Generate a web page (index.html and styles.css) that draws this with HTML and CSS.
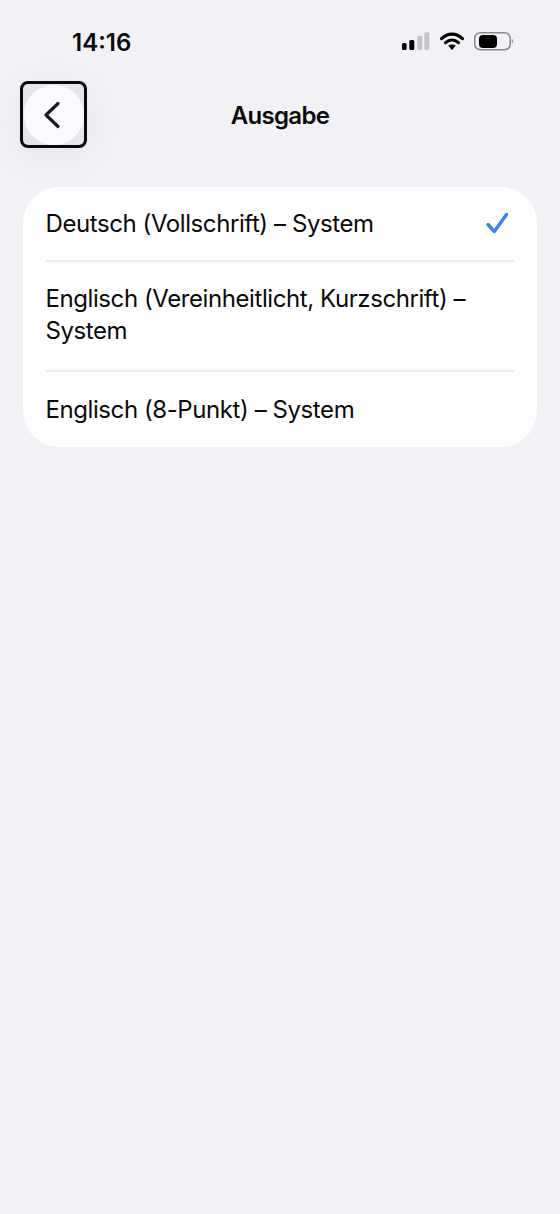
FILE: index.html
```html
<!doctype html>
<html lang="de">
<head>
    <meta charset="UTF-8">
    <title>Ausgabe</title>
    <link rel="stylesheet" href="styles.css">
</head>
<body>
<div class="status">
    <span class="time">14:16</span>
    <div class="status-icons">
        <svg width="28" height="20" viewBox="0 0 28 20">
            <rect x="0" y="12" width="4.6" height="7" rx="1.5" fill="#000"/>
            <rect x="7.3" y="9" width="5" height="10" rx="1.5" fill="#000"/>
            <rect x="15.3" y="4.7" width="5" height="14.3" rx="1.5" fill="#c4c4c8"/>
            <rect x="22.3" y="1.3" width="5" height="17.7" rx="1.5" fill="#c4c4c8"/>
        </svg>
        <svg width="24" height="20" viewBox="0 0 24 20">
            <path d="M1.6 7.6C8 1.6 16 1.6 22.4 7.6M5.6 11.6C9.5 8.1 14.5 8.1 18.4 11.6" fill="none" stroke="#000" stroke-width="3.2" stroke-linecap="round"/>
            <path d="M8.2 14.8C10.5 13 13.5 13 15.8 14.8L12 19Z" fill="#000"/>
        </svg>
        <svg width="40" height="20" viewBox="0 0 40 20">
            <rect x="0.75" y="1.75" width="35.5" height="17" rx="5.5" fill="none" stroke="#8a8a8e" stroke-width="1.5"/>
            <rect x="5" y="4" width="18" height="13" rx="4" fill="#000"/>
            <path d="M37.8 8C39.3 8.5 39.3 12 37.8 12.5Z" fill="#8a8a8e"/>
        </svg>
    </div>
</div>

<div class="nav">
    <a class="back" href="#">
        <span class="back-circle">
            <svg width="18" height="30" viewBox="0 0 18 30">
                <path d="M15 3.5L3 15L15 26.5" fill="none" stroke="#1c1c1e" stroke-width="3.2" stroke-linecap="round" stroke-linejoin="round"/>
            </svg>
        </span>
    </a>
    <h1>Ausgabe</h1>
</div>

<ul class="list">
    <li class="item">
        <span>Deutsch (Vollschrift) – System</span>
        <svg class="check" width="26" height="26" viewBox="0 0 26 26">
            <path d="M4 13.5L10.3 20.5L22.5 3.5" fill="none" stroke="#3b82f6" stroke-width="3.4" stroke-linecap="round" stroke-linejoin="round"/>
        </svg>
    </li>
    <li class="item item-wrap">
        <span>Englisch (Vereinheitlicht, Kurzschrift) – System</span>
    </li>
    <li class="item">
        <span>Englisch (8-Punkt) – System</span>
    </li>
</ul>
</body>
</html>
```

FILE: styles.css
```css
* {
    margin: 0;
    padding: 0;
    box-sizing: border-box;
}

ul {
    list-style: none;
}

body {
    width: 560px;
    height: 1214px;
    overflow: hidden;
    background-color: #f1f1f6;
    color: #0a0a0a;
    font-family: Inter, "Liberation Sans", sans-serif;
}

.status {
    height: 81px;
    padding: 28px 46px 0 72px;
    display: flex;
    justify-content: space-between;
    align-items: flex-start;
}

.time {
    font-size: 24px;
    line-height: 30px;
    font-weight: 600;
}

.status-icons {
    display: flex;
    align-items: center;
    gap: 10px;
    margin-top: 3px;
}

.nav {
    height: 106px;
    padding-left: 20px;
    position: relative;
}

.back {
    width: 67px;
    height: 67px;
    border: 3px solid #0a0a0a;
    border-radius: 8px;
    background-color: #e6e6ea;
    box-shadow: 0 8px 40px rgba(0, 0, 0, 0.06);
    display: flex;
    align-items: center;
    justify-content: center;
}

.back-circle {
    width: 60px;
    height: 60px;
    flex-shrink: 0;
    border-radius: 50%;
    background-color: #fbfbff;
    display: flex;
    align-items: center;
    justify-content: center;
    padding-right: 4px;
}

.nav h1 {
    position: absolute;
    top: 19px;
    left: 0;
    right: 0;
    text-align: center;
    font-size: 24px;
    line-height: 32px;
    font-weight: 600;
    letter-spacing: -0.7px;
}

.list {
    margin: 0 23px;
    padding: 0 23px;
    background-color: #fff;
    border-radius: 36px;
}

.item {
    display: flex;
    align-items: center;
    justify-content: space-between;
    padding: 21px 0 20px;
    font-size: 24px;
    line-height: 32px;
    letter-spacing: -0.42px;
    border-bottom: 2px solid #ebebed;
}

.item span {
    margin-left: -0.5px;
}

.item-wrap {
    padding-bottom: 23px;
}

.item:last-child {
    padding: 22px 0 21px;
    border-bottom: none;
}

.check {
    flex-shrink: 0;
    margin-right: 4px;
}
```
